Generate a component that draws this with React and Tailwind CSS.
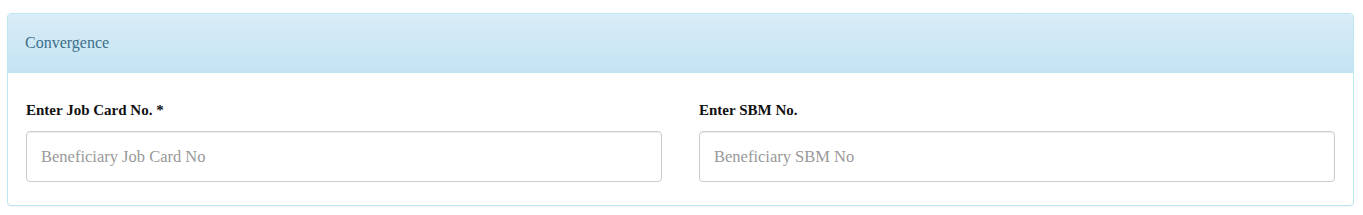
export default function App() {
  const fields = [
    { label: "Enter Job Card No. *", placeholder: "Beneficiary Job Card No" },
    { label: "Enter SBM No.", placeholder: "Beneficiary SBM No" },
  ]

  return (
    <div className="w-[1363px] h-[215px] bg-white pl-[7px] pr-[9px] pt-[13px] font-['Liberation_Serif',serif]">
      <div className="border border-[#bce8f1] rounded-[4px] shadow-[0_1px_1px_rgba(0,0,0,0.05)] bg-white overflow-hidden">
        {/* Panel heading */}
        <div className="h-[59px] flex items-center px-[17px] border-b border-[#bce8f1] bg-gradient-to-b from-[#d9edf7] to-[#c4e3f3]">
          <span className="text-[16px] text-[#3b6f89]">Convergence</span>
        </div>

        {/* Panel body */}
        <div className="grid grid-cols-2 gap-[37px] px-[18px] pt-[27px] pb-[23px]">
          {fields.map((f) => (
            <div key={f.label} className="flex flex-col">
              <label className="text-[15px] leading-[20px] font-bold text-[#111] mb-[11px]">{f.label}</label>
              <input
                type="text"
                placeholder={f.placeholder}
                className="h-[51px] w-full rounded-[4px] border border-[#ccc] bg-white px-[14px] text-[16.5px] text-[#555] placeholder:text-[#999] shadow-[inset_0_1px_1px_rgba(0,0,0,0.075)] outline-none font-['Liberation_Serif',serif]"
              />
            </div>
          ))}
        </div>
      </div>
    </div>
  )
}
